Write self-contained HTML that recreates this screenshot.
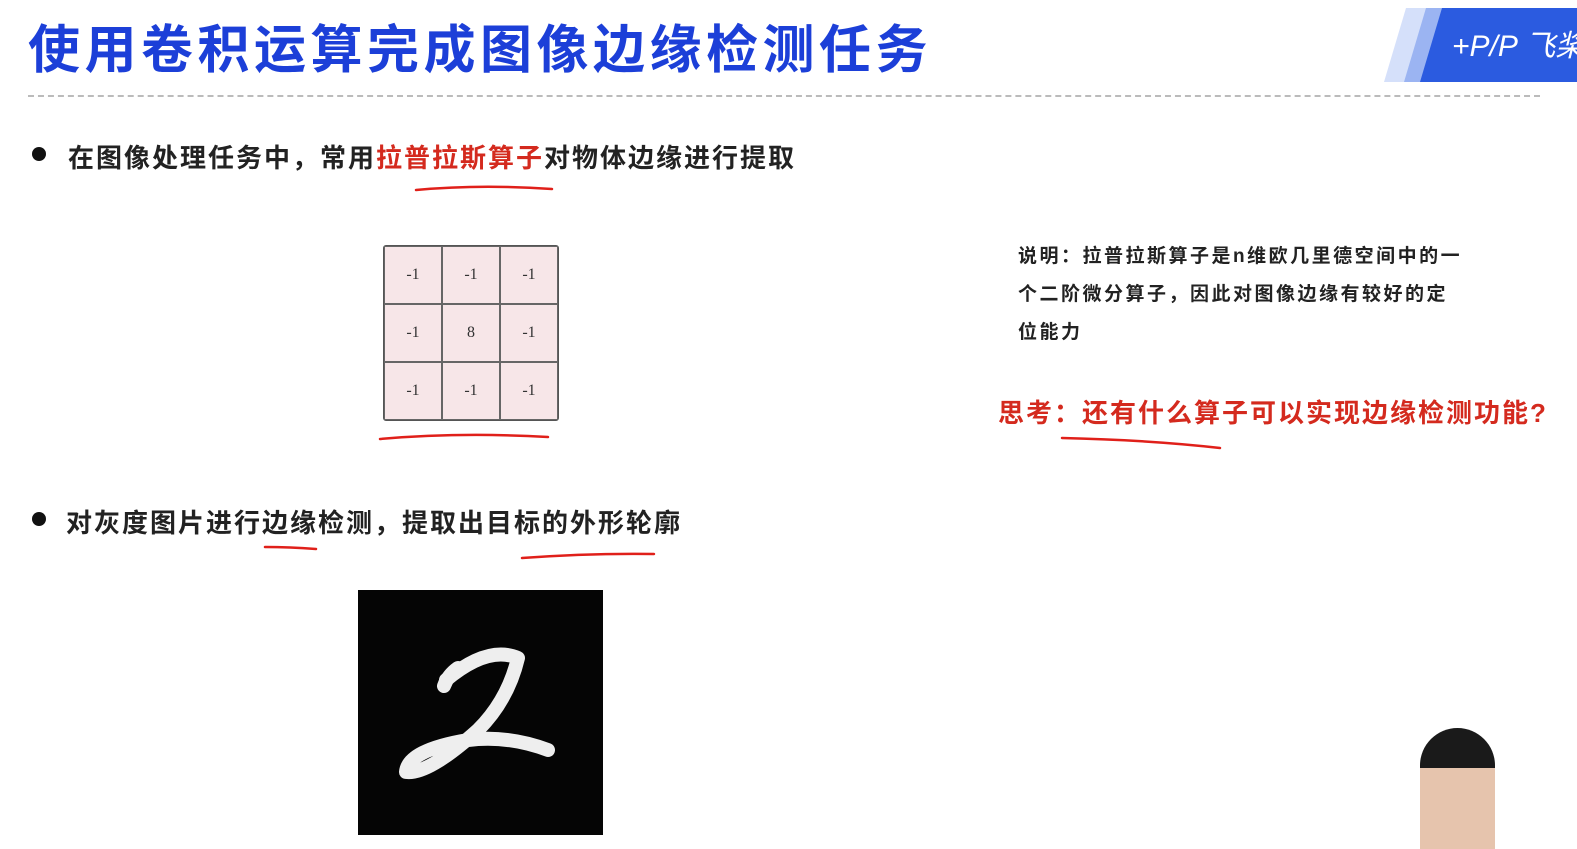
<!DOCTYPE html>
<html><head><meta charset="utf-8"><style>
body{margin:0;width:1577px;height:849px;background:#fff;position:relative;overflow:hidden;font-family:"Liberation Sans","Noto Sans CJK SC",sans-serif}
.a{position:absolute;white-space:nowrap}
.g{position:absolute;left:383px;top:245px;border:1px solid #555;border-radius:3px;display:grid;grid-template-columns:repeat(3,58px);grid-template-rows:repeat(3,58px);background:#f7e6e8}
.g div{border:1px solid #666;display:flex;align-items:center;justify-content:center;font-family:"Liberation Serif",serif;font-size:16px;color:#333}
</style></head><body>
<div class="a" style="left:28px;top:8px;font-size:52px;font-weight:bold;color:#1c3fd8;letter-spacing:4.5px">使用卷积运算完成图像边缘检测任务</div>
<svg class="a" style="left:1370px;top:0" width="207" height="82"><polygon points="14,82 36,8 207,8 207,82" fill="#d5e0fa"/><polygon points="34,82 56,8 207,8 207,82" fill="#9bb4f2"/><polygon points="50,82 72,8 207,8 207,82" fill="#2b5be0"/><text x="82" y="56" font-size="30" fill="#fff" font-style="italic" font-family="Liberation Sans">+P/P 飞桨</text></svg>
<div class="a" style="left:28px;top:95px;width:1512px;border-top:2px dashed #bbb"></div>
<div class="a" style="left:32px;top:147px;width:14px;height:14px;border-radius:50%;background:#111"></div>
<div class="a" style="left:68px;top:138px;font-size:26px;letter-spacing:2px;font-weight:bold;color:#222">在图像处理任务中，常用<span style="color:#d42a1e">拉普拉斯算子</span>对物体边缘进行提取</div>
<div class="g"><div>-1</div><div>-1</div><div>-1</div><div>-1</div><div>8</div><div>-1</div><div>-1</div><div>-1</div><div>-1</div></div>
<svg class="a" style="left:0;top:0" width="1577" height="849" fill="none" stroke="#e0201a" stroke-width="2.5" stroke-linecap="round">
<path d="M416 190 Q480 184 552 189"/><path d="M380 439 Q460 432 548 437"/><path d="M1062 438 Q1150 440 1220 448"/><path d="M265 547 Q290 547 316 549"/><path d="M522 558 Q590 553 654 554"/></svg>
<div class="a" style="left:1018px;top:238px;font-size:19px;letter-spacing:2.5px;font-weight:bold;line-height:38px;color:#222">说明：拉普拉斯算子是n维欧几里德空间中的一<br>个二阶微分算子，因此对图像边缘有较好的定<br>位能力</div>
<div class="a" style="left:998px;top:393px;font-size:26px;letter-spacing:2px;font-weight:bold;color:#d42a1e">思考：还有什么算子可以实现边缘检测功能?</div>
<div class="a" style="left:32px;top:512px;width:14px;height:14px;border-radius:50%;background:#111"></div>
<div class="a" style="left:66px;top:503px;font-size:26px;letter-spacing:2px;font-weight:bold;color:#222">对灰度图片进行边缘检测，提取出目标的外形轮廓</div>
<div class="a" style="left:358px;top:590px;width:245px;height:245px;background:#050505"></div>
<svg class="a" style="left:358px;top:590px" width="245" height="245" fill="none" stroke="#eee" stroke-width="14" stroke-linecap="round" stroke-linejoin="round"><path d="M88 90 Q130 55 160 68 Q150 110 120 140 Q70 185 48 182 Q50 160 110 150 Q150 145 190 160"/><path d="M100 78 Q90 85 86 96"/></svg>
<div class="a" style="left:1420px;top:730px;width:75px;height:119px;border-radius:38px 38px 0 0;background:#e6c4ad"></div>
<div class="a" style="left:1420px;top:728px;width:75px;height:40px;border-radius:38px 38px 0 0;background:#1a1a1a"></div>
</body></html>
